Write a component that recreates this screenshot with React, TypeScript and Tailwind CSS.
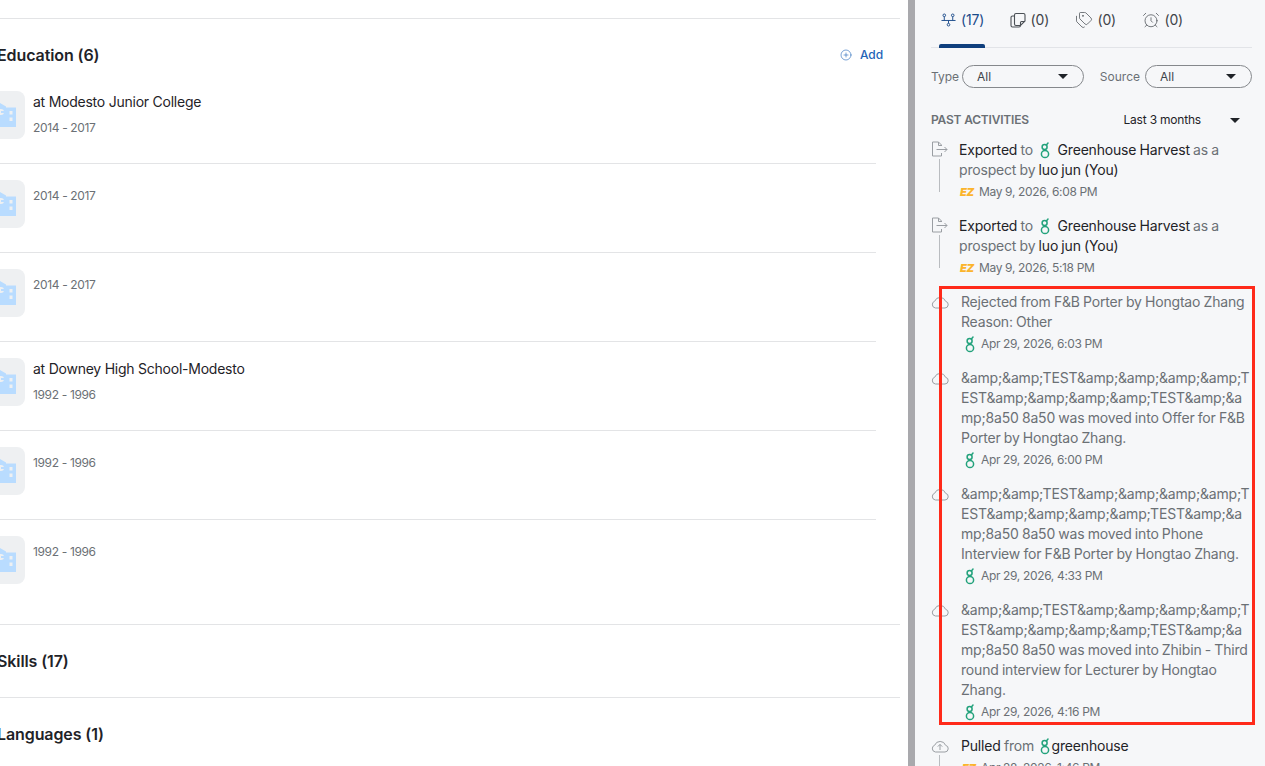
import { AlarmClock, Tags, CirclePlus } from 'lucide-react';
import type { ReactNode } from 'react';

const AMP_A = '&amp;&amp;TEST&amp;&amp;&amp;&amp;TEST&amp;&amp;&amp;&amp;TEST&amp;&amp;8a50 8a50 was moved into';

function GreenhouseLogo({ className }: { className?: string }) {
  return (
    <svg viewBox="0 0 10 17" className={className} fill="none" stroke="#23a27c" strokeWidth="1.5">
      <circle cx="4.6" cy="4.9" r="2.5" />
      <circle cx="5" cy="12" r="3.6" />
      <path d="M6.4 2.9 L8 1" strokeLinecap="round" />
      <path d="M4.8 7.4 L5 8.4" />
    </svg>
  );
}

function EzLogo() {
  return <span className="w-[14px] text-[11px] leading-none font-black tracking-[-0.3px] text-[#fbb42c] italic">EZ</span>;
}

function ExportIcon() {
  return (
    <svg viewBox="0 0 17 16" className="h-4 w-[17px]" fill="none" stroke="#9a9ea3" strokeWidth="1">
      <path d="M10.5 5V4L7.5 1H1.5v14h9v-3" />
      <path d="M7.5 1v3.5h3" />
      <path d="M5.5 8.5h10.5M13.5 6l2.5 2.5-2.5 2.5" />
    </svg>
  );
}

function CloudIcon({ arrow }: { arrow?: boolean }) {
  return (
    <svg viewBox="0 0 18 14" className="mt-[2px] h-[14px] w-[18px]" fill="none" stroke="#9a9ea3" strokeWidth="1">
      <path d="M4.5 13 H14 A3.4 3.4 0 0 0 14.6 6.3 A5.8 5.8 0 0 0 3.7 6.2 A3.5 3.5 0 0 0 4.5 13 Z" />
      {arrow && <path d="M9 11V5.5M6.8 7.6 9 5.4l2.2 2.2" />}
    </svg>
  );
}

function NetworkIcon() {
  return (
    <svg viewBox="0 0 16 14" className="h-[14px] w-[15px]" fill="none" stroke="#1a4a8a" strokeWidth="1">
      <circle cx="3.5" cy="2" r="1.4" />
      <circle cx="12.5" cy="2" r="1.4" />
      <circle cx="8" cy="12" r="1.4" />
      <path d="M0.5 7.5h15M3.5 3.5v4M12.5 3.5v4M8 7.5v3" />
    </svg>
  );
}

function NotesIcon() {
  return (
    <svg viewBox="0 0 16 16" className="h-4 w-4" fill="none" stroke="#4b5056" strokeWidth="1.1">
      <path d="M4.5 3a1.5 1.5 0 0 1 1.5-1.5h7.5A1.5 1.5 0 0 1 15 3v6l-4.5 4.5H6A1.5 1.5 0 0 1 4.5 12Z" />
      <path d="M10.5 13.5V10.5a1 1 0 0 1 1-1H15" />
      <path d="M4.5 4H2.5A1.5 1.5 0 0 0 1 5.5v8A1.5 1.5 0 0 0 2.5 15H9a1.5 1.5 0 0 0 1.5-1.5" />
    </svg>
  );
}

function BuildingIcon() {
  return (
    <svg viewBox="0 0 24 24" className="h-6 w-6" fill="#b9dcff">
      <path d="M0 3 L7 0 L13 3.5 V4.5 H23 V24 H0 Z" />
      <circle cx="8" cy="9" r="3" fill="#eef0f2" />
      <rect x="8" y="8" width="4" height="2" fill="#b9dcff" />
      <rect x="16.5" y="8" width="3" height="3.5" fill="#eef0f2" />
      <rect x="16.5" y="14.5" width="3" height="3.5" fill="#eef0f2" />
    </svg>
  );
}

function Caret({ className }: { className?: string }) {
  return <span className={`h-0 w-0 border-x-[5.5px] border-t-[5px] border-x-transparent border-t-[#1f2328] ${className ?? ''}`} />;
}

function Tab({ icon, count, active }: { icon: ReactNode; count: number; active?: boolean }) {
  return (
    <div className={`flex h-[47px] items-start gap-[5px] pt-[11px] text-sm leading-[18px] tracking-[-0.2px] ${active ? 'text-[#1a4a8a]' : 'text-[#3f4449]'}`}>
      <span className="flex h-[18px] items-center">{icon}</span>
      ({count})
    </div>
  );
}

function Select({ label, width, gap }: { label: string; width: string; gap: string }) {
  return (
    <div className={`flex items-center ${gap}`}>
      <span className="text-xs text-[#6b7075]">{label}</span>
      <div className={`flex h-[23px] items-center justify-between rounded-full border border-[#85888c] pr-[15px] pl-[14px] text-xs text-[#3f4449] ${width}`}>
        All
        <Caret />
      </div>
    </div>
  );
}

function Activity({ icon, line, indent, date, badge, children }: { icon: ReactNode; line?: boolean; indent?: boolean; date: string; badge: 'ez' | 'gh'; children: ReactNode }) {
  return (
    <div className="flex pb-[14px]">
      <div className="flex w-[28px] shrink-0 flex-col">
        <div className="flex h-[18px] items-center">{icon}</div>
        {line && <div className="mt-[1px] ml-[8px] h-[33px] w-px bg-[#b9bcc0]" />}
      </div>
      <div className={`w-[293px] ${indent ? 'pl-[2px]' : ''}`}>
        <div className="text-sm leading-5 tracking-[-0.18px] wrap-break-word text-[#6b7075] [word-spacing:-0.5px]">{children}</div>
        <div className={`flex h-[22px] items-center pt-[2px] text-xs tracking-[-0.35px] text-[#6b7075] ${badge === 'gh' ? 'gap-[6px] pl-[4px]' : 'gap-[5px] pl-px'}`}>
          {badge === 'ez' ? <EzLogo /> : <GreenhouseLogo className="h-[17px] w-[10px]" />}
          {date}
        </div>
      </div>
    </div>
  );
}

function Dark({ children }: { children: ReactNode }) {
  return <span className="text-[#1f2328]">{children}</span>;
}

function Harvest() {
  return (
    <>
      <Dark>Exported</Dark> to <GreenhouseLogo className="mx-[4px] inline h-[17px] w-[10px] align-[-4px]" /> <Dark>Greenhouse Harvest</Dark> as a prospect by <Dark>luo jun (You)</Dark>
    </>
  );
}

const educations = [
  { name: 'at Modesto Junior College', years: '2014 - 2017' },
  { years: '2014 - 2017' },
  { years: '2014 - 2017' },
  { name: 'at Downey High School-Modesto', years: '1992 - 1996' },
  { years: '1992 - 1996' },
  { years: '1992 - 1996' },
];

export default function App() {
  return (
    <div className="relative flex h-[766px] overflow-hidden bg-white font-['Inter',sans-serif]">
      <div className="w-[908px] shrink-0 overflow-hidden pt-[18px]">
        <div className="w-[900px] border-t border-[#e3e4e6]">
          <div className="-ml-[3px] flex h-[72px] items-start justify-between pt-[26px] pr-[17px]">
            <h2 className="text-base leading-5 font-semibold tracking-[-0.1px] text-[#1f2328]">Education (6)</h2>
            <div className="flex h-5 items-center gap-2 text-xs font-medium tracking-[-0.1px] text-[#1f64b8]">
              <CirclePlus className="h-3 w-3" strokeWidth={1.2} />
              Add
            </div>
          </div>
          <div className="w-[876px] pb-[16px]">
            {educations.map((e, i) => (
              <div key={i} className={`flex gap-2 pb-[24px] ${i === 0 ? '' : 'pt-[16px]'} ${i < 5 ? 'border-b border-[#e3e4e6]' : ''}`}>
                <div className="-ml-[23px] flex h-12 w-12 shrink-0 items-center justify-end rounded-lg bg-[#eef0f2] pr-[8px]">
                  <BuildingIcon />
                </div>
                <div className={e.name ? 'pt-[1px]' : 'pt-[6px]'}>
                  {e.name && <div className="mb-[6px] text-sm leading-5 tracking-[-0.24px] text-[#1f2328]">{e.name}</div>}
                  <div className="text-xs leading-5 tracking-[-0.35px] text-[#6b7075]">{e.years}</div>
                </div>
              </div>
            ))}
          </div>
        </div>
        <div className="w-[900px] border-t border-[#e3e4e6]">
          <h2 className="-ml-[3px] h-[72px] pt-[26px] text-base leading-5 font-semibold tracking-[-0.1px] text-[#1f2328]">Skills (17)</h2>
        </div>
        <div className="w-[900px] border-t border-[#e3e4e6]">
          <h2 className="-ml-[3px] pt-[26px] text-base leading-5 font-semibold tracking-[-0.1px] text-[#1f2328]">Languages (1)</h2>
        </div>
      </div>

      <div className="w-[7px] shrink-0 bg-[#a9a9ad]" />

      <div className="min-w-0 flex-1 bg-[#f6f7f9] pl-[16px]">
        <div className="w-[321px]">
          <div className="relative flex gap-[25.5px] border-b border-[#e2e4e8] pl-[10px]">
            <Tab active count={17} icon={<NetworkIcon />} />
            <Tab count={0} icon={<NotesIcon />} />
            <Tab count={0} icon={<Tags className="h-[18px] w-[18px] text-[#4b5056]" strokeWidth={1} />} />
            <Tab count={0} icon={<AlarmClock className="h-[18px] w-[18px] text-[#4b5056]" strokeWidth={1} />} />
            <div className="absolute -bottom-px left-[8px] h-1 w-[46px] rounded-t-[2px] bg-[#0f3f7d]" />
          </div>
          <div className="mt-[17px] flex justify-between">
            <Select label="Type" width="w-[122px]" gap="gap-[3px]" />
            <Select label="Source" width="w-[107px]" gap="gap-[5px]" />
          </div>
          <div className="mt-[22px] flex h-5 items-center justify-between pr-[12px]">
            <span className="text-xs font-semibold tracking-[-0.2px] text-[#6b7075]">PAST ACTIVITIES</span>
            <div className="flex items-center gap-[29px] text-xs tracking-[-0.2px] text-[#1f2328]">
              Last 3 months
              <Caret />
            </div>
          </div>
          <div className="mt-[10px]">
            <Activity icon={<ExportIcon />} line badge="ez" date="May 9, 2026, 6:08 PM"><Harvest /></Activity>
            <Activity icon={<ExportIcon />} line badge="ez" date="May 9, 2026, 5:18 PM"><Harvest /></Activity>
            <Activity icon={<CloudIcon />} indent badge="gh" date="Apr 29, 2026, 6:03 PM">
              Rejected from F&amp;B Porter by Hongtao Zhang<br />Reason: Other
            </Activity>
            <Activity icon={<CloudIcon />} indent badge="gh" date="Apr 29, 2026, 6:00 PM">
              {AMP_A} Offer for F&amp;B Porter by Hongtao Zhang.
            </Activity>
            <Activity icon={<CloudIcon />} indent badge="gh" date="Apr 29, 2026, 4:33 PM">
              {AMP_A} Phone Interview for F&amp;B Porter by Hongtao Zhang.
            </Activity>
            <Activity icon={<CloudIcon />} indent badge="gh" date="Apr 29, 2026, 4:16 PM">
              {AMP_A} Zhibin - Third round interview for Lecturer by Hongtao Zhang.
            </Activity>
            <Activity icon={<CloudIcon arrow />} line indent badge="ez" date="Apr 28, 2026, 1:46 PM">
              <Dark>Pulled</Dark> from <GreenhouseLogo className="-mr-[2px] ml-[3px] inline h-[17px] w-[10px] align-[-4px]" /> <Dark>greenhouse</Dark>
            </Activity>
          </div>
        </div>
      </div>

      <div className="pointer-events-none absolute top-[286px] left-[939px] h-[439px] w-[316px] border-[3px] border-[#ff2a1a]" />
    </div>
  );
}
